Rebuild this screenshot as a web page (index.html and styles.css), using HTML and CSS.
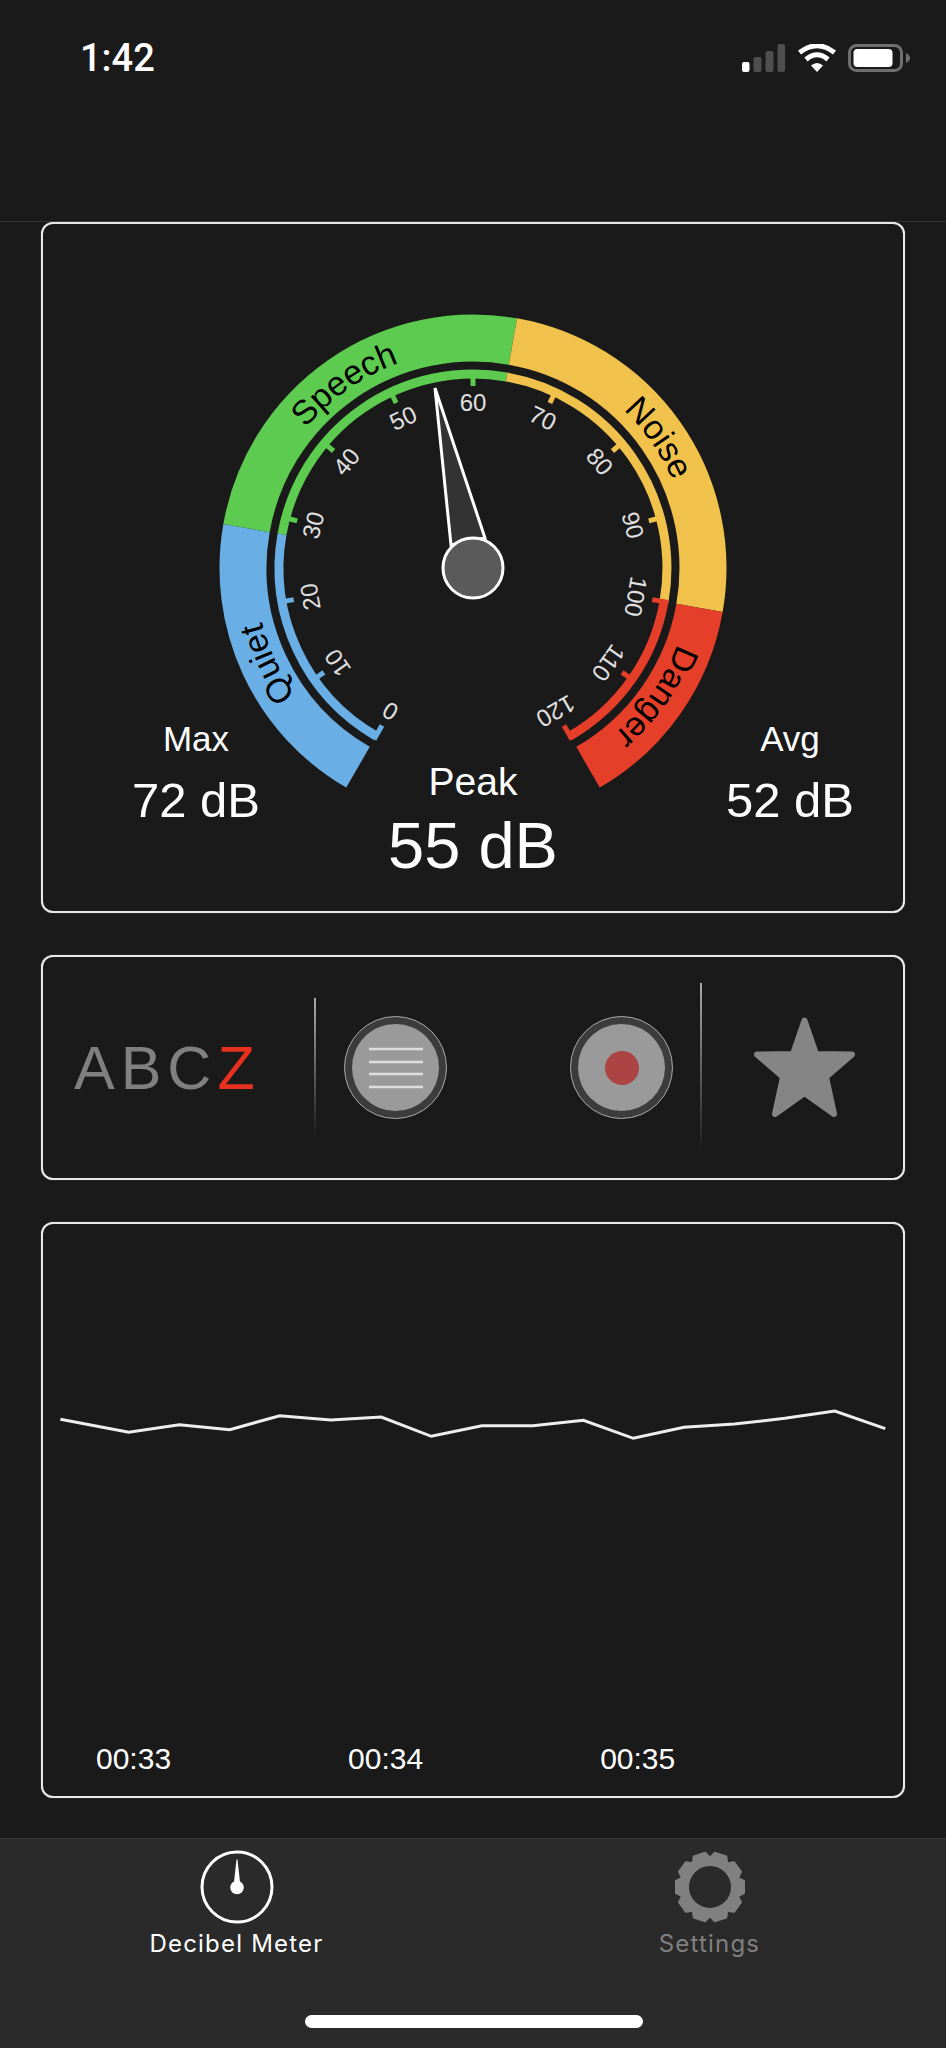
FILE: index.html
```html
<!DOCTYPE html>
<html lang="en">
<head>
  <meta charset="UTF-8" />
  <title>Decibel Meter</title>
  <link rel="stylesheet" href="styles.css">
</head>
<body>
  <div class="status-bar">
    <span class="time">1:42</span>
    <div class="status-icons">
      <svg width="44" height="28" viewBox="0 0 44 28">
        <rect x="0" y="18" width="7.5" height="10" rx="2" fill="#fff"/>
        <rect x="11.5" y="13" width="8" height="15" rx="2" fill="#4f4f4f"/>
        <rect x="23.5" y="7" width="8" height="21" rx="2" fill="#4f4f4f"/>
        <rect x="35.5" y="0" width="7.5" height="28" rx="2" fill="#4f4f4f"/>
      </svg>
      <svg width="38" height="28" viewBox="0 0 38 28">
        <path d="M19 28 L13 21.5 Q19 16.5 25 21.5 Z" fill="#fff"/>
        <path d="M8 15.5 Q19 6 30 15.5" fill="none" stroke="#fff" stroke-width="5"/>
        <path d="M1.5 8.5 Q19 -5 36.5 8.5" fill="none" stroke="#fff" stroke-width="5"/>
      </svg>
      <svg width="62" height="28" viewBox="0 0 62 28">
        <rect x="1.5" y="1.5" width="52" height="25" rx="7" fill="none" stroke="#6f6f6f" stroke-width="3"/>
        <rect x="5.5" y="5" width="39" height="18" rx="4" fill="#fff"/>
        <path d="M58 9 Q62 11 62 14 Q62 17 58 19 Z" fill="#6f6f6f"/>
      </svg>
    </div>
  </div>
  <div class="nav-bar"></div>

  <main class="content">
    <section class="card gauge-card">
      <svg class="gauge" width="860" height="687" viewBox="-430 -344 860 687">
        <!-- outer bands, 0 dB is at -150deg and 120 dB at +150deg -->
        <path class="band" stroke="#69afe5" d="M-115 199.2 A230 230 0 0 1 -226.5 -39.9"/>
        <path class="band" stroke="#5ccb4f" d="M-226.5 -39.9 A230 230 0 0 1 39.9 -226.5"/>
        <path class="band" stroke="#f0c24b" d="M39.9 -226.5 A230 230 0 0 1 226.5 39.9"/>
        <path class="band" stroke="#e53e29" d="M226.5 39.9 A230 230 0 0 1 115 199.2"/>

        <path id="quiet-arc" class="guide" d="M-109 188.8 A218 218 0 0 1 -214.7 -37.9"/>
        <path id="speech-arc" class="guide" d="M-214.7 -37.9 A218 218 0 0 1 37.9 -214.7"/>
        <path id="noise-arc" class="guide" d="M37.9 -214.7 A218 218 0 0 1 214.7 37.9"/>
        <path id="danger-arc" class="guide" d="M214.7 37.9 A218 218 0 0 1 109 188.8"/>
        <text class="band-label"><textPath href="#quiet-arc" startOffset="50%">Quiet</textPath></text>
        <text class="band-label"><textPath href="#speech-arc" startOffset="50%">Speech</textPath></text>
        <text class="band-label"><textPath href="#noise-arc" startOffset="50%">Noise</textPath></text>
        <text class="band-label"><textPath href="#danger-arc" startOffset="50%">Danger</textPath></text>

        <!-- thin scale arc -->
        <path class="scale" stroke="#69afe5" d="M-97 168 A194 194 0 0 1 -191 -33.7"/>
        <path class="scale" stroke="#5ccb4f" d="M-191 -33.7 A194 194 0 0 1 33.7 -191"/>
        <path class="scale" stroke="#f0c24b" d="M33.7 -191 A194 194 0 0 1 191 33.7"/>
        <path class="scale" stroke="#e53e29" d="M191 33.7 A194 194 0 0 1 97 168"/>

        <g class="tick blue"><path transform="rotate(-150)" d="M0 -198 V-182"/><path transform="rotate(-125)" d="M0 -198 V-182"/><path transform="rotate(-100)" d="M0 -198 V-182"/></g>
        <g class="tick green"><path transform="rotate(-75)" d="M0 -198 V-182"/><path transform="rotate(-50)" d="M0 -198 V-182"/><path transform="rotate(-25)" d="M0 -198 V-182"/><path d="M0 -198 V-182"/></g>
        <g class="tick yellow"><path transform="rotate(25)" d="M0 -198 V-182"/><path transform="rotate(50)" d="M0 -198 V-182"/><path transform="rotate(75)" d="M0 -198 V-182"/></g>
        <g class="tick red"><path transform="rotate(100)" d="M0 -198 V-182"/><path transform="rotate(125)" d="M0 -198 V-182"/><path transform="rotate(150)" d="M0 -198 V-182"/></g>

        <g class="scale-num">
          <text transform="rotate(-150)" y="-157">0</text>
          <text transform="rotate(-125)" y="-157">10</text>
          <text transform="rotate(-100)" y="-157">20</text>
          <text transform="rotate(-75)" y="-157">30</text>
          <text transform="rotate(-50)" y="-157">40</text>
          <text transform="rotate(-25)" y="-157">50</text>
          <text y="-157">60</text>
          <text transform="rotate(25)" y="-157">70</text>
          <text transform="rotate(50)" y="-157">80</text>
          <text transform="rotate(75)" y="-157">90</text>
          <text transform="rotate(100)" y="-157">100</text>
          <text transform="rotate(125)" y="-157">110</text>
          <text transform="rotate(150)" y="-157">120</text>
        </g>

        <path class="needle" d="M-38 -180 L-22 -23 L12 -30 Z"/>
        <circle class="knob" r="30"/>
      </svg>
      <div class="stats">
        <div class="stat">
          <div class="stat-name">Max</div>
          <div class="stat-value">72 dB</div>
        </div>
        <div class="stat stat-peak">
          <div class="stat-name">Peak</div>
          <div class="stat-value">55 dB</div>
        </div>
        <div class="stat stat-avg">
          <div class="stat-name">Avg</div>
          <div class="stat-value">52 dB</div>
        </div>
      </div>
    </section>

    <section class="card tools-card">
      <div class="abc">ABC<span class="abc-z">Z</span></div>
      <div class="divider divider-short"></div>
      <div class="tool-buttons">
        <div class="round-btn">
          <svg width="54" height="42" viewBox="0 0 54 42">
            <path d="M0 2 H54 M0 15 H54 M0 27 H54 M0 40 H54" stroke="#ddd" stroke-width="2.5"/>
          </svg>
        </div>
        <div class="round-btn"><div class="rec-dot"></div></div>
      </div>
      <div class="divider divider-tall"></div>
      <div class="star-cell">
        <svg width="102" height="102" viewBox="0 0 102 102">
          <path d="M50.5 3.5 L62 37 L98 37.5 L72 60 L80 97 L50.5 76 L21 97 L29 60 L3 37.5 L39 37 Z" fill="#858585" stroke="#858585" stroke-width="6" stroke-linejoin="round"/>
        </svg>
      </div>
    </section>

    <section class="card chart-card">
      <svg class="chart" width="860" height="518" viewBox="43 1224 860 518">
        <polyline points="60.4,1419.3 128.7,1432.3 179.3,1424.7 229.8,1429.7 279.7,1415.7 330.8,1420 381.3,1417 431.3,1436.3 481.8,1425.7 532.9,1425.7 583.4,1420.3 633.3,1438.3 683.9,1427.3 734.4,1424 784.9,1418.3 834.8,1411 885.3,1428.7" fill="none" stroke="#eee" stroke-width="3"/>
      </svg>
      <div class="chart-times">
        <span>00:33</span>
        <span>00:34</span>
        <span>00:35</span>
      </div>
    </section>
  </main>

  <nav class="tab-bar">
    <div class="tabs">
      <div class="tab tab-active">
        <svg width="74" height="74" viewBox="0 0 74 74">
          <circle cx="37" cy="37" r="35" fill="none" stroke="#fff" stroke-width="3"/>
          <path d="M36.5 9.5 H37.5 L40 32 H34 Z" fill="#fff"/>
          <circle cx="37" cy="37.5" r="6.8" fill="#fff"/>
        </svg>
        <span class="tab-label">Decibel Meter</span>
      </div>
      <div class="tab">
        <svg width="74" height="74" viewBox="-37 -37 74 74">
          <circle r="25.25" fill="none" stroke="#808080" stroke-width="8.5"/>
          <g fill="#808080" stroke="#808080" stroke-width="2" stroke-linejoin="round">
            <path id="tooth" transform="rotate(18)" d="M-9 -28 L-6 -34 H6 L9 -28 Z"/>
            <use href="#tooth" transform="rotate(36)"/>
            <use href="#tooth" transform="rotate(72)"/>
            <use href="#tooth" transform="rotate(108)"/>
            <use href="#tooth" transform="rotate(144)"/>
            <use href="#tooth" transform="rotate(180)"/>
            <use href="#tooth" transform="rotate(216)"/>
            <use href="#tooth" transform="rotate(252)"/>
            <use href="#tooth" transform="rotate(288)"/>
            <use href="#tooth" transform="rotate(324)"/>
          </g>
        </svg>
        <span class="tab-label">Settings</span>
      </div>
    </div>
    <div class="home-bar"></div>
  </nav>
</body>
</html>
```

FILE: styles.css
```css
* {
  box-sizing: border-box;
}
body {
  margin: 0;
  width: 946px;
  height: 2048px;
  display: flex;
  flex-direction: column;
  background-color: #1a1a1a;
  color: #fff;
  font-family: "Liberation Sans", Arial, sans-serif;
  overflow: hidden;
}

/* status + nav */
.status-bar {
  height: 100px;
  padding: 44px 36px 0 80px;
  display: flex;
  justify-content: space-between;
  align-items: flex-start;
}
.time {
  font-family: Roboto, sans-serif;
  font-size: 38px;
  line-height: 28px;
  font-weight: 500;
}
.status-icons {
  display: flex;
  gap: 12px;
}
.nav-bar {
  height: 122px;
  border-bottom: 1px solid #333;
}

.content {
  flex: 1;
  padding: 0 41px;
  display: flex;
  flex-direction: column;
  gap: 42px;
}
.card {
  border: 2px solid #e8e8e8;
  border-radius: 12px;
  background-color: #1a1a1a;
  box-shadow: 0 0 1px rgba(255, 255, 255, 0.6);
}

/* gauge */
.gauge-card {
  position: relative;
  height: 691px;
}
.gauge {
  display: block;
}
.band {
  fill: none;
  stroke-width: 47;
}
.guide {
  fill: none;
}
.band-label {
  font-size: 34px;
  fill: #000;
  text-anchor: middle;
}
.scale {
  fill: none;
  stroke-width: 9;
}
.tick {
  fill: none;
  stroke-width: 5;
}
.tick.blue { stroke: #69afe5; }
.tick.green { stroke: #5ccb4f; }
.tick.yellow { stroke: #f0c24b; }
.tick.red { stroke: #e53e29; }
.scale-num {
  font-size: 24px;
  fill: #e0e0e0;
  text-anchor: middle;
}
.needle {
  fill: #333;
  stroke: #fff;
  stroke-width: 3;
}
.knob {
  fill: #5a5a5a;
  stroke: #fff;
  stroke-width: 3;
}
.stats {
  position: absolute;
  left: 0;
  top: 495px;
  display: grid;
  grid-template-columns: 306px 248px 306px;
  align-items: start;
  text-align: center;
}
.stat-name {
  font-size: 35px;
  line-height: 40px;
}
.stat-value {
  margin-top: 13px;
  font-size: 49px;
  line-height: 56px;
}
.stat-peak {
  padding-top: 41px;
}
.stat-peak .stat-name {
  font-size: 39px;
  line-height: 44px;
}
.stat-peak .stat-value {
  margin-top: 6px;
  font-size: 65px;
  line-height: 72px;
}
.stat-avg {
  padding-left: 80px;
}

/* tools row */
.tools-card {
  height: 225px;
  display: flex;
  align-items: center;
}
.abc {
  width: 271px;
  padding-left: 31px;
  font-size: 61px;
  letter-spacing: 6px;
  color: #808080;
}
.abc-z {
  color: #e8301f;
}
.divider {
  width: 2px;
  flex-shrink: 0;
  background: linear-gradient(#aaa, #1a1a1a);
}
.divider-short {
  height: 140px;
}
.divider-tall {
  height: 170px;
}
.tool-buttons {
  flex: 1;
  padding: 0 27px 0 28px;
  display: flex;
  justify-content: space-between;
}
.round-btn {
  width: 103px;
  height: 103px;
  border-radius: 50%;
  border: 1.5px solid #aaa;
  background-color: #3c3c3c;
  display: flex;
  align-items: center;
  justify-content: center;
  position: relative;
}
.round-btn::before {
  content: "";
  position: absolute;
  inset: 7px;
  border-radius: 50%;
  background-color: #9a9a9a;
}
.round-btn svg,
.rec-dot {
  position: relative;
}
.rec-dot {
  width: 34px;
  height: 34px;
  border-radius: 50%;
  background-color: #ad4444;
}
.star-cell {
  width: 201px;
  padding-left: 4px;
  display: flex;
  justify-content: center;
}

/* chart */
.chart-card {
  height: 576px;
}
.chart {
  display: block;
}
.chart-times {
  padding-left: 53px;
  display: flex;
  gap: 177px;
  font-size: 30px;
}

/* tab bar */
.tab-bar {
  height: 210px;
  background-color: #2a2a2a;
  border-top: 1px solid #3a3a3a;
  position: relative;
}
.tabs {
  padding-top: 11px;
  display: grid;
  grid-template-columns: 473px 473px;
}
.tab {
  display: flex;
  flex-direction: column;
  align-items: center;
  gap: 5px;
  color: #808080;
}
.tab-active {
  color: #fff;
}
.tab-label {
  font-family: Inter, sans-serif;
  font-size: 24px;
  line-height: 30px;
  letter-spacing: 1.2px;
}
.home-bar {
  position: absolute;
  left: 305px;
  top: 176px;
  width: 338px;
  height: 13px;
  border-radius: 7px;
  background-color: #fff;
}
```
